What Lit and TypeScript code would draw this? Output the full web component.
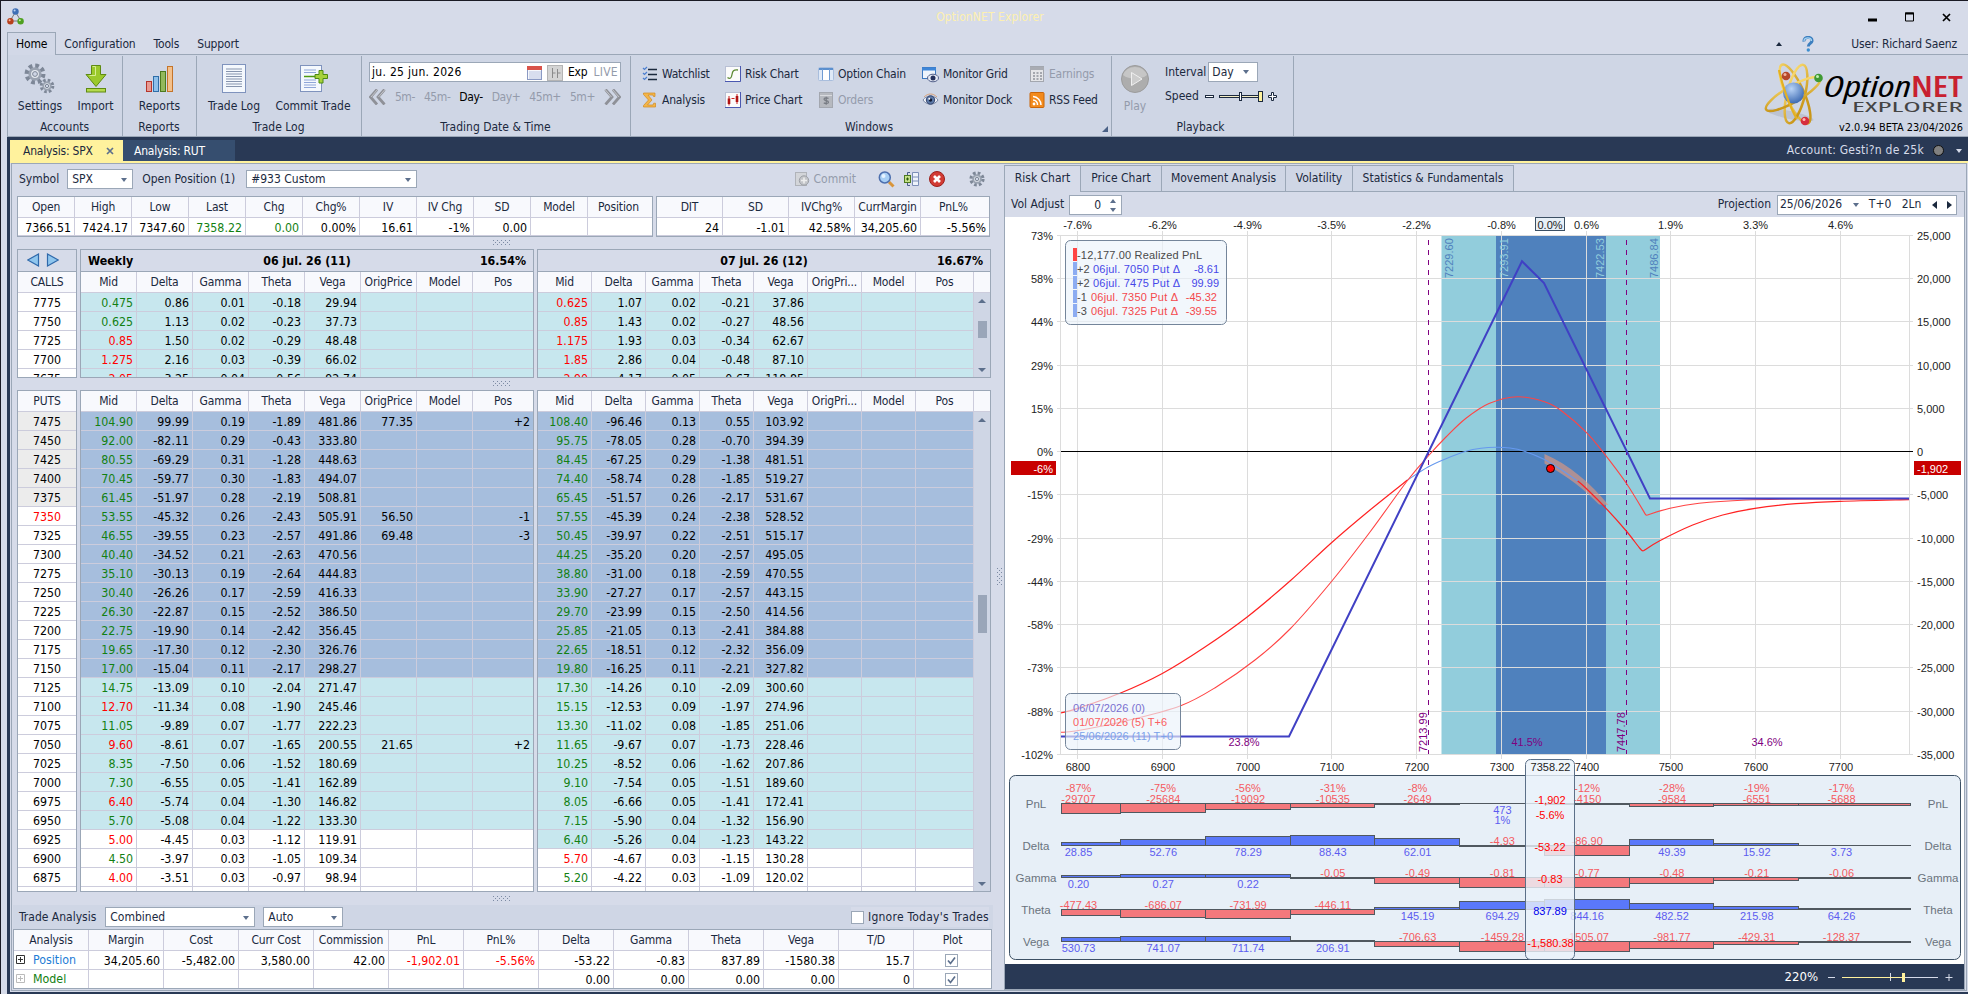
import { LitElement, html, svg, css, nothing } from 'lit';
import { customElement, property } from 'lit/decorators.js';
import { classMap } from 'lit/directives/class-map.js';

const base = css`
  * {
    box-sizing: border-box;
  }
  svg {
    display: block;
    flex: none;
  }
  .combo {
    display: flex;
    align-items: center;
    justify-content: space-between;
    background: #fff;
    border: 1px solid #9ba7b7;
    padding: 1px 5px 0 4px;
    color: #1b293e;
    white-space: nowrap;
  }
  .arrow {
    width: 0;
    height: 0;
    border: 3.5px solid transparent;
    border-top: 4px solid #5c6f8c;
    border-bottom: 0;
  }
  .arrow.up {
    border-top: 0;
    border-bottom: 4px solid #5c6f8c;
  }
`;

/* ---------- icons ---------- */

const gear = (cx: number, cy: number, r: number) => svg`
  <circle cx=${cx} cy=${cy} r=${r} fill="none" stroke="#7d8797" stroke-width=${r * 0.62}
    stroke-dasharray="${r * 0.44} ${r * 0.345}"></circle>
  <circle cx=${cx} cy=${cy} r=${r * 0.66} fill="#e6eaf0" stroke="#9aa3b1" stroke-width=${r * 0.34}></circle>
  <circle cx=${cx} cy=${cy} r=${r * 0.3} fill="#cfd6e5" stroke="#7d8797"></circle>`;

const icons = {
  app: html`<svg width="17" height="17" viewBox="0 0 17 17">
    <path d="M8.5 4 3 13h11z" fill="none" stroke="#777"></path>
    <circle cx="8.5" cy="3.5" r="3.2" fill="#3f6fb5"></circle><circle cx="7.6" cy="2.6" r="1" fill="#b9d3f5"></circle>
    <circle cx="3.4" cy="13.2" r="3.2" fill="#b8401c"></circle><circle cx="2.6" cy="12.2" r="1" fill="#f5b79f"></circle>
    <circle cx="13.6" cy="13.2" r="3.2" fill="#4ea020"></circle><circle cx="12.8" cy="12.2" r="1" fill="#c9f0a5"></circle>
  </svg>`,
  settings: html`<svg width="32" height="32" viewBox="0 0 32 32">${gear(11, 11, 8)}${gear(23, 23, 5.6)}</svg>`,
  import: html`<svg width="32" height="32" viewBox="0 0 32 32">
    <path d="M11.500 2.500h9v9h5.500L16 23.500 6 11.500h5.500z" fill="#9bc92c" stroke="#5e8a12"></path>
    <path d="M12.500 3.500h3v9h-6" fill="none" stroke="#d6ee93"></path>
    <rect x="6.500" y="25.500" width="19" height="3.500" fill="#b5da4c" stroke="#5e8a12"></rect>
  </svg>`,
  reports: html`<svg width="32" height="32" viewBox="0 0 32 32">
    <rect x="2.500" y="18.500" width="5" height="10" fill="#e79a92" stroke="#b5342a"></rect>
    <rect x="9.500" y="13.500" width="5" height="15" fill="#8fc0ea" stroke="#2f6ea8"></rect>
    <rect x="16.500" y="8.500" width="5" height="20" fill="#93b85c" stroke="#4d7a1f"></rect>
    <rect x="23.500" y="3.500" width="5" height="25" fill="#f3c08b" stroke="#c4742a"></rect>
  </svg>`,
  log: html`<svg width="32" height="32" viewBox="0 0 32 32">
    <rect x="4.500" y="1.500" width="23" height="28" fill="#f4f8fd" stroke="#7f93bd"></rect>
    ${[6, 8.500, 11, 13.500, 16, 18.500, 21, 23.500].map((y) => svg`<path d="M8 ${y}h16" stroke="#8795ae"></path>`)}
  </svg>`,
  commitTrade: html`<svg width="32" height="32" viewBox="0 0 32 32">
    <rect x="3.500" y="2.500" width="21" height="26" fill="#f4f8fd" stroke="#7f93bd"></rect>
    ${[7, 9.500, 17, 19.500, 22, 24.500].map((y) => svg`<path d="M7 ${y}h12" stroke="#8fa6d8"></path>`)}
    <path d="M7 13.500h12" stroke="#4d9a10" stroke-width="1.500"></path>
    <path d="M22 7.500h4v4h4.500v4H26V20h-4v-4.500h-4v-4h4z" fill="#a6d13c" stroke="#4c8a12"></path>
  </svg>`,
  calendar: html`<svg width="16" height="16" viewBox="0 0 16 16">
    <rect x=".5" y="1.500" width="14" height="13" fill="#f6f8fc" stroke="#8b9ac4"></rect>
    <rect x="0" y="1" width="15" height="4" fill="#d9534a"></rect>
    ${[7, 9, 11, 13].map((y) => svg`<path d="M2.500 ${y}h11" stroke="#7d8fc4" stroke-dasharray="1 1"></path>`)}
  </svg>`,
  toggle: html`<svg width="17" height="16" viewBox="0 0 17 16">
    <rect x=".5" y=".5" width="15" height="15" fill="#d4d4d4" stroke="#b4b4b4"></rect>
    <path d="M5.500 3v10M5.500 8h3M10.500 4v9M10.500 8h3" stroke="#8a8a8a" fill="none"></path>
  </svg>`,
  chevrons: html`<svg width="17" height="16" viewBox="0 0 17 16">
    <path d="M8 .5 1.500 8l6.500 7.500M15.500.5l-6.500 7.500 6.500 7.500" fill="none" stroke="#8f9198" stroke-width="2.800"></path>
    <path d="M8.500 .5 2 8M16 .5 9.500 8" fill="none" stroke="#c3c5ca"></path>
  </svg>`,
  watchlist: html`<svg width="16" height="16" viewBox="0 0 16 16">
    <path d="M6 3.500h9M6 8.500h9M6 13.500h9" stroke="#1b293e" stroke-width="1.300"></path>
    <path d="M1 2l1.500 1.500L5 1M1 7l1.500 1.500L5 6M1 12l1.500 1.500L5 11" fill="none" stroke="#4c7fd0" stroke-width="1.200"></path>
  </svg>`,
  analysis: html`<svg width="16" height="16" viewBox="0 0 16 16">
    <path d="M1.500 1h11.500v3.500h-1.500L11 3H6l4 5-4.500 5H11l.7-1.800h1.800V15h-12v-1.500L6.500 8l-5-5.500z" fill="#f3b54a" stroke="#d18a1c" stroke-width=".7"></path>
  </svg>`,
  riskChart: html`<svg width="16" height="16" viewBox="0 0 16 16">
    <rect x=".5" y=".5" width="15" height="15" fill="#fbfbfb" stroke="#b9c0d4"></rect>
    <path d="M15.500 0v15.500H0" fill="none" stroke="#4a58b0"></path>
    <path d="M2.500 11.500c2.500 2 4 .5 4.500-3s1.500-5 6-4.500" fill="none" stroke="#5d8a35" stroke-width="1.300"></path>
  </svg>`,
  priceChart: html`<svg width="16" height="16" viewBox="0 0 16 16">
    <rect x=".5" y=".5" width="15" height="15" fill="#fbfbfb" stroke="#b9c0d4"></rect>
    <path d="M15.500 0v15.500H0" fill="none" stroke="#4a58b0"></path>
    <path d="M4 4v9.500M6.500 6.500h3M12 2v10" stroke="#c22" fill="none"></path>
    <path d="M4 6.500v5.500M12 4v6" stroke="#b01212" stroke-width="2.600"></path>
  </svg>`,
  optionChain: html`<svg width="16" height="16" viewBox="0 0 16 16">
    <rect x=".5" y="1.500" width="15" height="13" rx="1" fill="#dfe9f7" stroke="#a9bedd"></rect>
    <path d="M1 3h14" stroke="#5b8fce" stroke-width="2"></path>
    <path d="M4.500 3v11M11.500 3v11" stroke="#6f9bd3"></path><rect x="5" y="4" width="6" height="10" fill="#fff"></rect>
  </svg>`,
  orders: html`<svg width="16" height="16" viewBox="0 0 16 16">
    <rect x="1.500" y=".5" width="13" height="15" fill="#b6b9bf" stroke="#a3a7af"></rect><path d="M2 3.500h12" stroke="#d8dade"></path>
    <path d="M10.500 6.500c-1-1-4.500-1-4.500.7 0 2 4.500 1 4.500 3 0 1.600-3.500 1.600-4.700.5M8.200 4.800v8" fill="none" stroke="#777b83" stroke-width="1.200"></path>
  </svg>`,
  monitorGrid: html`<svg width="17" height="17" viewBox="0 0 17 17">
    <rect x=".5" y="1.500" width="13" height="11" fill="#eef4fc" stroke="#3e79c0"></rect><path d="M0 3h14" stroke="#3e86d8" stroke-width="3"></path>
    <ellipse cx="11" cy="12" rx="5.500" ry="3.800" fill="#e8ecf6" stroke="#53608a"></ellipse><circle cx="11" cy="12" r="2.500" fill="#26315c"></circle>
  </svg>`,
  monitorDock: html`<svg width="17" height="16" viewBox="0 0 17 16">
    <path d="M1 8c3-5 12-5 15 0-3 5.500-12 5.500-15 0z" fill="#f3f6fb" stroke="#7a88a6"></path>
    <path d="M2 5c4-4 9-4 13 0" stroke="#d8a27a" fill="none"></path>
    <circle cx="8.500" cy="8" r="4.200" fill="#5c79a8" stroke="#33436b"></circle><circle cx="8.500" cy="8" r="1.700" fill="#101a33"></circle><circle cx="7.300" cy="6.800" r="1" fill="#fff"></circle>
  </svg>`,
  earnings: html`<svg width="16" height="16" viewBox="0 0 16 16">
    <rect x="1.500" y=".5" width="13" height="15" fill="#e4e5e8" stroke="#a3a7af"></rect><path d="M1 2.500h14" stroke="#a9acb3" stroke-width="3"></path>
    ${[7, 10, 13].map((y) => svg`<path d="M4 ${y}h9" stroke="#8e929a" stroke-width="1.500" stroke-dasharray="2 1.500"></path>`)}
  </svg>`,
  rss: html`<svg width="16" height="16" viewBox="0 0 16 16">
    <rect x="1" y=".5" width="14" height="15" rx="1" fill="#f28a1c" stroke="#c9660a"></rect>
    <circle cx="5" cy="12" r="1.400" fill="#fff"></circle>
    <path d="M4 8a4.500 4.500 0 0 1 4.500 5M4 4.500A8.500 8.500 0 0 1 12 13" fill="none" stroke="#fff" stroke-width="1.500"></path>
  </svg>`,
  play: html`<svg width="32" height="32" viewBox="0 0 32 32">
    <circle cx="16" cy="16" r="13.500" fill="#adadad" stroke="#9c9c9c"></circle>
    <path d="M4 12a13 13 0 0 1 24 0c-6 5-18 5-24 0z" fill="#c6c6c6"></path>
    <path d="M12.500 9.500 23 16l-10.500 6.500z" fill="#cdcdcd" stroke="#f0f0f0"></path>
  </svg>`,
  help: html`<svg width="12" height="16" viewBox="0 0 12 16">
    <path d="M2 5.500C1.500 0 10.500 0 10 5c-.3 2.500-3.700 2.500-3.700 5.500" fill="none" stroke="#3d7fbf" stroke-width="3"></path>
    <path d="M2 5C2 .8 9.800.8 9.500 5" fill="none" stroke="#a8d4f2" stroke-width="1.300"></path><circle cx="6.300" cy="14" r="1.700" fill="#3d8fd0"></circle>
  </svg>`,
  commit: html`<svg width="15" height="16" viewBox="0 0 15 16">
    <rect x=".5" y="1.500" width="11" height="13" fill="#d3d5d9" stroke="#b0b3b9"></rect>
    <circle cx="9" cy="9.500" r="4.700" fill="#c3c5c9" stroke="#9da0a6"></circle><path d="M9 6.500v6M6 9.500h6" stroke="#eee" stroke-width="1.600"></path>
  </svg>`,
  magnifier: html`<svg width="17" height="17" viewBox="0 0 17 17">
    <path d="M11 11l4.500 4.500" stroke="#d9953a" stroke-width="3"></path>
    <circle cx="6.800" cy="6.500" r="5.500" fill="#a8cff5" stroke="#4d6fae" stroke-width="1.500"></circle><circle cx="5.500" cy="5" r="2" fill="#e6f3ff"></circle>
  </svg>`,
  expand: html`<svg width="16" height="14" viewBox="0 0 16 14">
    <rect x=".5" y="3.500" width="6" height="7" fill="#c5e08a" stroke="#4d7a1f"></rect><path d="M2 7h3M3.500 5.500v3" stroke="#2c5a0a"></path>
    <path d="M3.500 3V.5H6M3.500 11v2.500H6" stroke="#4a5a8a" fill="none"></path>
    <path d="M8.500.5h6v13h-6zM8.500 5h6M8.500 9h6" fill="#eef3fb" stroke="#7d8fb8"></path>
  </svg>`,
  close: html`<svg width="16" height="16" viewBox="0 0 16 16">
    <circle cx="8" cy="8" r="7.500" fill="#d23b34" stroke="#9c1f1b"></circle><path d="M5 5l6 6M11 5l-6 6" stroke="#fff" stroke-width="2.700"></path>
  </svg>`,
  gear: html`<svg width="16" height="16" viewBox="0 0 16 16">${gear(8, 8, 5.8)}</svg>`,
  prev: html`<svg width="13" height="14" viewBox="0 0 13 14"><path d="M11.500 1v12L.8 7z" fill="#8fc6ee" stroke="#2f69ab" stroke-width="1.200"></path></svg>`,
  next: html`<svg width="13" height="14" viewBox="0 0 13 14"><path d="M1.500 1v12L12.200 7z" fill="#8fc6ee" stroke="#2f69ab" stroke-width="1.200"></path></svg>`,
};

const grip = html`<svg width="18" height="6" viewBox="0 0 18 6">
  <path d="M0 .5h18M0 4.500h18" stroke="#7c8aa3" stroke-dasharray="1 3"></path>
  <path d="M2 2.500h16" stroke="#7c8aa3" stroke-dasharray="1 3"></path>
</svg>`;

/* ---------- ribbon ---------- */

@customElement('app-ribbon')
export class AppRibbon extends LitElement {
  static styles = [
    base,
    css`
      :host {
        display: block;
        color: #1b293e;
      }
      .title {
        display: grid;
        grid-template-columns: 1fr auto 1fr;
        align-items: center;
        height: 31px;
        padding-left: 6px;
      }
      .title .name {
        color: #fdf0b0;
        padding-top: 2px;
        letter-spacing: 0.1px;
        margin-left: 5px;
      }
      .win {
        display: flex;
        justify-content: flex-end;
        gap: 27px;
        padding-right: 16px;
      }
      .tabs {
        display: flex;
        height: 23px;
        padding-left: 6px;
        letter-spacing: -0.15px;
      }
      .tabs .tab {
        padding: 5px 10px 0 8px;
        border-bottom: 1px solid #9ba7b7;
      }
      .tabs .tab.on {
        border: 1px solid #9ba7b7;
        border-bottom: 0;
        padding: 4px 8px 0;
        color: #000;
        background: #d2d8e7;
      }
      .tabs .user {
        flex: 1;
        display: flex;
        justify-content: flex-end;
        align-items: center;
        border-bottom: 1px solid #9ba7b7;
        padding: 2px 11px 0 0;
      }
      .tabs .arrow {
        border-bottom-color: #1b293e;
      }
      .tabs svg {
        margin: 0 37px 0 20px;
      }
      .ribbon {
        display: flex;
        height: 82px;
        margin-left: 6px;
        padding-top: 1px;
        background: #cfd6e5;
        border: 1px solid #9ba7b7;
        border-width: 0 0 1px 1px;
      }
      .group {
        display: flex;
        flex-direction: column;
        justify-content: space-between;
        border-right: 1px solid #9ba7b7;
        position: relative;
      }
      .group .caption {
        text-align: center;
        height: 16px;
        line-height: 15px;
        padding-right: 1px;
      }
      .body {
        display: flex;
        padding-top: 7px;
      }
      .big {
        display: flex;
        flex-direction: column;
        align-items: center;
        gap: 4px;
        line-height: 15px;
        white-space: nowrap;
      }
      .off {
        color: #949bab;
      }
      .accounts { width: 115px; }
      .accounts .big:first-child { width: 64px; }
      .accounts .big { width: 47px; }
      .reports { width: 74px; }
      .reports .big { width: 73px; }
      .trade { width: 165px; }
      .trade .big:first-child { width: 74px; }
      .trade .big { width: 84px; }
      .date { width: 269px; }
      .date .body { flex-direction: column; padding: 6px 9px 0 7px; gap: 7px; }
      .datebox {
        display: flex;
        align-items: center;
        height: 20px;
        background: #fff;
        border: 1px solid #9ba7b7;
        padding: 1px 2px 0;
      }
      .datebox .day { flex: 1; color: #000; letter-spacing: 0.3px; }
      .datebox svg { margin-right: 4px; }
      .datebox .exp { margin-right: 6px; color: #000; letter-spacing: -0.2px; }
      .datebox .off { letter-spacing: 0.3px; }
      .steps { display: flex; align-items: center; justify-content: space-between; letter-spacing: -0.4px; }
      .steps .cur { color: #000; }
      .flip { transform: scaleX(-1); }
      .windows { width: 481px; }
      .windows .body {
        display: grid;
        grid-template-columns: 83px 93px 104px 107px 80px;
        grid-template-rows: 26px 26px;
        padding: 5px 0 0 11px;
        letter-spacing: -0.2px;
      }
      .windows .caption, .playback .caption { padding-right: 4px; }
      .item { display: flex; align-items: center; gap: 4px; white-space: nowrap; }
      .corner {
        position: absolute;
        right: 3px;
        bottom: 4px;
        border: 3.5px solid transparent;
        border-right-color: #4a6186;
        border-bottom-color: #4a6186;
      }
      .playback { width: 182px; }
      .playback .big { width: 46px; }
      .speed { display: flex; flex-direction: column; gap: 7px; padding-left: 7px; margin-top: -1px; }
      .speed div { display: flex; align-items: center; }
      .speed .combo { width: 50px; height: 20px; margin-left: 2px; padding: 0 8px 0 3px; }
      .speed svg { margin-left: 6px; }
      .logo { margin: 5px 2px 0 auto; }
    `,
  ];

  big(icon: unknown, label: string, off = false) {
    return html`<div class="big ${off ? 'off' : ''}">${icon}<span>${label}</span></div>`;
  }

  item(icon: unknown, label: string, off = false) {
    return html`<div class="item ${off ? 'off' : ''}">${icon}<span>${label}</span></div>`;
  }

  logo() {
    return html`<svg class="logo" width="204" height="72" viewBox="1762 61 204 72">
      <defs>
        <radialGradient id="core" cx=".4" cy=".3" r=".7">
          <stop offset="0" stop-color="#b9d4f7"></stop><stop offset="1" stop-color="#3f6cb3"></stop>
        </radialGradient>
        <linearGradient id="gold" x1="0" y1="0" x2="1" y2="1">
          <stop offset="0" stop-color="#ffe27a"></stop><stop offset="1" stop-color="#c08a08"></stop>
        </linearGradient>
      </defs>
      <ellipse cx="1790" cy="115" rx="24" ry="4" fill="#b3bbcb" opacity=".7" transform="rotate(12 1790 115)"></ellipse>
      <g fill="none" stroke="url(#gold)" stroke-width="2.500">
        <ellipse cx="1795" cy="94" rx="9" ry="32" transform="rotate(-24 1795 94)"></ellipse>
        <ellipse cx="1796" cy="94" rx="9" ry="30" transform="rotate(14 1796 94)"></ellipse>
        <ellipse cx="1793" cy="94" rx="8" ry="31" transform="rotate(60 1793 94)"></ellipse>
      </g>
      <circle cx="1793.500" cy="93" r="10.500" fill="url(#core)"></circle>
      <path d="M1779 70c3 14 10 36 18 49" fill="none" stroke="#e3b023" stroke-width="2.200"></path>
      <circle cx="1786" cy="76" r="4.300" fill="#b5482a"></circle><circle cx="1785" cy="74.500" r="1.500" fill="#f0b09a"></circle>
      <circle cx="1818.500" cy="78" r="4.300" fill="#3f9a32"></circle><circle cx="1817.500" cy="76.500" r="1.500" fill="#c5f0b5"></circle>
      <circle cx="1805" cy="121" r="4.300" fill="#d62e3c"></circle><circle cx="1804" cy="119.500" r="1.500" fill="#ffb5b5"></circle>
      <text x="1824" y="97" font-family="Open Sans, Noto Sans, sans-serif" font-style="italic" font-size="29" textLength="87" lengthAdjust="spacingAndGlyphs" fill="#000">Option</text>
      <text x="1911" y="97" font-family="Open Sans, Noto Sans, sans-serif" font-weight="600" font-size="29" textLength="52" lengthAdjust="spacingAndGlyphs" fill="#c8202f">NET</text>
      <text x="1852" y="111.500" font-family="Open Sans, Noto Sans, sans-serif" font-size="14" textLength="111" lengthAdjust="spacingAndGlyphs" fill="#444">EXPLORER</text>
      <text x="1839" y="131" font-size="11" textLength="124" lengthAdjust="spacingAndGlyphs" fill="#000">v2.0.94 BETA 23/04/2026</text>
    </svg>`;
  }

  render() {
    return html`
      <div class="title">
        ${icons.app}
        <span class="name">OptionNET Explorer</span>
        <div class="win">
          <svg width="10" height="10"><path d="M0 8h9" stroke="#000" stroke-width="3"></path></svg>
          <svg width="10" height="10"><path d="M.5 1v8h8V1z" fill="none" stroke="#000"></path><path d="M0 1.500h9" stroke="#000" stroke-width="2"></path></svg>
          <svg width="10" height="10"><path d="M1 2l7 7M8 2l-7 7" stroke="#000" stroke-width="1.700"></path></svg>
        </div>
      </div>
      <div class="tabs">
        <span class="tab on">Home</span>
        <span class="tab">Configuration</span>
        <span class="tab">Tools</span>
        <span class="tab">Support</span>
        <div class="user"><i class="arrow up"></i>${icons.help}User: Richard Saenz</div>
      </div>
      <div class="ribbon">
        <div class="group accounts">
          <div class="body">${this.big(icons.settings, 'Settings')}${this.big(icons.import, 'Import')}</div>
          <div class="caption">Accounts</div>
        </div>
        <div class="group reports">
          <div class="body">${this.big(icons.reports, 'Reports')}</div>
          <div class="caption">Reports</div>
        </div>
        <div class="group trade">
          <div class="body">${this.big(icons.log, 'Trade Log')}${this.big(icons.commitTrade, 'Commit Trade')}</div>
          <div class="caption">Trade Log</div>
        </div>
        <div class="group date">
          <div class="body">
            <div class="datebox">
              <span class="day">ju. 25 jun. 2026</span>${icons.calendar}${icons.toggle}
              <span class="exp">Exp</span><span class="off">LIVE</span>
            </div>
            <div class="steps off">
              ${icons.chevrons}<span>5m-</span><span>45m-</span><span class="cur">Day-</span>
              <span>Day+</span><span>45m+</span><span>5m+</span><span class="flip">${icons.chevrons}</span>
            </div>
          </div>
          <div class="caption">Trading Date &amp; Time</div>
        </div>
        <div class="group windows">
          <div class="body">
            ${this.item(icons.watchlist, 'Watchlist')}${this.item(icons.riskChart, 'Risk Chart')}
            ${this.item(icons.optionChain, 'Option Chain')}${this.item(icons.monitorGrid, 'Monitor Grid')}
            ${this.item(icons.earnings, 'Earnings', true)}
            ${this.item(icons.analysis, 'Analysis')}${this.item(icons.priceChart, 'Price Chart')}
            ${this.item(icons.orders, 'Orders', true)}${this.item(icons.monitorDock, 'Monitor Dock')}
            ${this.item(icons.rss, 'RSS Feed')}
          </div>
          <div class="caption">Windows</div>
          <i class="corner"></i>
        </div>
        <div class="group playback">
          <div class="body">
            ${this.big(icons.play, 'Play', true)}
            <div class="speed">
              <div>Interval<span class="combo">Day<i class="arrow"></i></span></div>
              <div>
                Speed
                <svg width="74" height="14" viewBox="0 0 74 14">
                  <rect x=".5" y="5.500" width="8" height="2" fill="#fff" stroke="#1b293e"></rect>
                  <rect x="14.500" y="5.500" width="40" height="2" fill="#f4edc4" stroke="#1b293e"></rect>
                  <rect x="34.500" y="2.500" width="2" height="8" fill="#fff" stroke="#1b293e"></rect>
                  <rect x="53.500" y="1.500" width="4" height="10" fill="#fff29d" stroke="#1b293e"></rect>
                  <path d="M66.500 2.500h2v3h3v2h-3v3h-2v-3h-3v-2h3z" fill="#fff" stroke="#1b293e"></path>
                </svg>
              </div>
            </div>
          </div>
          <div class="caption">Playback</div>
        </div>
        ${this.logo()}
      </div>
    `;
  }
}

/* ---------- option chain and trade analysis ---------- */

const STRIKES_CALLS = [7775, 7750, 7725, 7700, 7675];

const callsA = `g0.475 0.86 0.01 -0.18 29.94
g0.625 1.13 0.02 -0.23 37.73
r0.85 1.50 0.02 -0.29 48.48
r1.275 2.16 0.03 -0.39 66.02
r2.05 3.25 0.04 -0.56 92.74`;

const callsB = `r0.625 1.07 0.02 -0.21 37.86
r0.85 1.43 0.02 -0.27 48.56
r1.175 1.93 0.03 -0.34 62.67
r1.85 2.86 0.04 -0.48 87.10
r2.90 4.17 0.05 -0.67 118.85`;

const putsA = `g104.90 99.99 0.19 -1.89 481.86 77.35 +2
g92.00 -82.11 0.29 -0.43 333.80
g80.55 -69.29 0.31 -1.28 448.63
g70.45 -59.77 0.30 -1.83 494.07
g61.45 -51.97 0.28 -2.19 508.81
g53.55 -45.32 0.26 -2.43 505.91 56.50 -1
g46.55 -39.55 0.23 -2.57 491.86 69.48 -3
g40.40 -34.52 0.21 -2.63 470.56
g35.10 -30.13 0.19 -2.64 444.83
g30.40 -26.26 0.17 -2.59 416.33
g26.30 -22.87 0.15 -2.52 386.50
g22.75 -19.90 0.14 -2.42 356.45
g19.65 -17.30 0.12 -2.30 326.76
g17.00 -15.04 0.11 -2.17 298.27
g14.75 -13.09 0.10 -2.04 271.47
r12.70 -11.34 0.08 -1.90 245.46
g11.05 -9.89 0.07 -1.77 222.23
r9.60 -8.61 0.07 -1.65 200.55 21.65 +2
g8.35 -7.50 0.06 -1.52 180.69
g7.30 -6.55 0.05 -1.41 162.89
r6.40 -5.74 0.04 -1.30 146.82
g5.70 -5.08 0.04 -1.22 133.30
r5.00 -4.45 0.03 -1.12 119.91
g4.50 -3.97 0.03 -1.05 109.34
r4.00 -3.51 0.03 -0.97 98.94`;

const putsB = `g108.40 -96.46 0.13 0.55 103.92
g95.75 -78.05 0.28 -0.70 394.39
g84.45 -67.25 0.29 -1.38 481.51
g74.40 -58.74 0.28 -1.85 519.27
g65.45 -51.57 0.26 -2.17 531.67
g57.55 -45.39 0.24 -2.38 528.52
g50.45 -39.97 0.22 -2.51 515.17
g44.25 -35.20 0.20 -2.57 495.05
g38.80 -31.00 0.18 -2.59 470.55
g33.90 -27.27 0.17 -2.57 443.15
g29.70 -23.99 0.15 -2.50 414.56
g25.85 -21.05 0.13 -2.41 384.88
g22.65 -18.51 0.12 -2.32 356.09
g19.80 -16.25 0.11 -2.21 327.82
g17.30 -14.26 0.10 -2.09 300.60
g15.15 -12.53 0.09 -1.97 274.96
g13.30 -11.02 0.08 -1.85 251.06
g11.65 -9.67 0.07 -1.73 228.46
g10.25 -8.52 0.06 -1.62 207.86
g9.10 -7.54 0.05 -1.51 189.60
g8.05 -6.66 0.05 -1.41 172.41
g7.15 -5.90 0.04 -1.32 156.90
g6.40 -5.26 0.04 -1.23 143.22
r5.70 -4.67 0.03 -1.15 130.28
g5.20 -4.22 0.03 -1.09 120.02`;

const STRIKES_PUTS = Array.from({ length: 25 }, (_, i) => 7475 - i * 25);

@customElement('trade-panel')
export class TradePanel extends LitElement {
  static styles = [
    base,
    css`
      :host {
        display: block;
        width: 981px;
        color: #1b293e;
      }
      .toolbar {
        display: flex;
        align-items: center;
        height: 32px;
        padding: 0 8px 2px 7px;
      }
      .toolbar .symbol { width: 66px; height: 20px; margin: 0 9px 0 8px; }
      .toolbar .position { width: 171px; height: 18px; margin-left: 11px; }
      .toolbar .tools { display: flex; align-items: center; margin-left: auto; }
      .toolbar .off { color: #949bab; margin: 0 22px 0 4px; }
      .toolbar .tools svg { margin-right: 9px; }
      .toolbar .tools svg:first-child { margin: 0; }
      .toolbar .tools svg:last-child { margin: 0 0 0 15px; }
      .row { display: flex; gap: 3px; padding-left: 5px; }
      .grid {
        display: grid;
        border: 1px solid #9ba7b7;
        background: #fff;
        overflow: hidden;
        color: #000;
        font-size: 12.3px;
      }
      .grid > span {
        border: 1px solid #ccccdc;
        border-width: 0 1px 1px 0;
        text-align: right;
        padding-right: 3px;
        line-height: 20px;
        white-space: nowrap;
        overflow: hidden;
      }
      .grid > .h {
        background: #f8f9fd;
        text-align: center;
        padding: 0;
        line-height: 20px;
        color: #1b293e;
        font-size: 12px;
        letter-spacing: -0.15px;
      }
      .grid > .last { border-right: 0; }
      .quote { width: 636px; grid-template: 21px 18px / repeat(10, 57px) 1fr; }
      .stats { width: 334px; grid-template: 21px 18px / repeat(4, 66px) 1fr; }
      .quote .last, .stats .last { padding-right: 3px; }
      .split { display: flex; justify-content: center; align-items: center; height: 12px; padding-left: 0; margin-left: -1px; }
      .box {
        width: 454px;
        display: flex;
        flex-direction: column;
        border: 1px solid #9ba7b7;
        overflow: hidden;
      }
      .box.strikes { width: 60px; }
      .calls { height: 129px; }
      .puts { height: 502px; }
      .box .grid { border: 0; grid-auto-rows: 19px; grid-template-rows: 21px; flex: 1; align-content: start; }
      .box .cap {
        display: grid;
        grid-template-columns: 1fr auto 1fr;
        align-items: center;
        height: 22px;
        flex: none;
        border-bottom: 1px solid #9ba7b7;
        font-weight: bold;
        color: #000;
        padding: 1px 7px 0;
        font-size: 12.3px;
      }
      .box .cap b:last-child { text-align: right; }
      .box .nav { display: flex; justify-content: center; gap: 6px; padding: 0 9px 1px 0; }
      .box.strikes .grid > span { text-align: center; padding: 0; border-right: 0; }
      .box .wide { grid-template-columns: repeat(7, 56px) 1fr; }
      .box .narrow { grid-template-columns: repeat(7, 54px) 1fr; }
      .inner { display: flex; flex: 1; min-height: 0; }
      .grid > .g { color: #128012; }
      .grid > .r { color: #f00; }
      .grid > .one { background: #a6bedd; }
      .grid > .two { background: #c7e7ee; }
      .grid > .itm { background: #ececec; }
      .scroll {
        width: 16px;
        display: flex;
        flex-direction: column;
        align-items: center;
        background: #cfd6e5;
      }
      .scroll .top { width: 16px; height: 21px; background: #f8f9fd; border-bottom: 1px solid #ccccdc; }
      .scroll .thumb { width: 9px; background: #9aa6b9; }
      .scroll .arrow { border-left-width: 4px; border-right-width: 4px; }
      .scroll .up { margin-top: 6px; }
      .scroll .down { margin: auto 0 5px; }
      .trade { display: flex; align-items: center; height: 24px; margin: 0 0 0 1px; padding: 0 4px 0 6px; background: #cfd6e5; }
      .trade .combo { height: 20px; }
      .trade .mode { width: 150px; margin: 0 8px 0 9px; }
      .trade .auto { width: 80px; }
      .trade .ignore { margin-left: auto; display: flex; gap: 4px; background: #d6dbe9; align-items: center; height: 20px; letter-spacing: 0.25px; }
      .check { width: 13px; height: 13px; border: 1px solid #9ba7b7; background: #fff; }
      .analysis { width: 979px; height: 60px; margin-left: 1px; grid-template: 21px 19px 18px / repeat(12, 75px) 1fr; }
      .analysis > .name { display: flex; align-items: center; gap: 7px; padding-left: 2px; text-align: left; }
      .analysis > .name.link { color: #1c7cd6; }
      .analysis > .plot { display: flex; justify-content: center; align-items: center; padding: 0 2px 0 0; }
      .analysis > .low { border-bottom: 0; }
    `,
  ];

  headers(orig: string) {
    return ['Mid', 'Delta', 'Gamma', 'Theta', 'Vega', orig, 'Model', 'Pos'].map(
      (h, i) => html`<span class="h ${i === 7 && orig === 'OrigPrice' ? 'last' : ''}">${h}</span>`
    );
  }

  /** One chain grid; `one` and `two` are the counts of rows inside one and two deviations. */
  chain(data: string, narrow: boolean, one: number, two: number) {
    const orig = narrow ? 'OrigPri...' : 'OrigPrice';
    return html`<div class="grid ${narrow ? 'narrow' : 'wide'}">
      ${this.headers(orig)}
      ${[...data.split('\n'), ' '].map((line, row) => {
        const [mid, delta, gamma, theta, vega, price = '', pos = ''] = line.split(' ');
        const band = { one: row < one, two: row >= one && row < two };
        return [mid, delta, gamma, theta, vega, price, '', pos].map((v, i) => {
          const cls = {
            ...band,
            g: i === 0 && v[0] === 'g',
            r: i === 0 && v[0] === 'r',
            last: i === 7 && !narrow,
          };
          return html`<span class=${classMap(cls)}>${i === 0 ? v.slice(1) : v}</span>`;
        });
      })}
    </div>`;
  }

  checkbox(on: boolean) {
    return html`<svg width="13" height="13" viewBox="0 0 13 13">
      <rect x=".5" y=".5" width="12" height="12" fill="#fff" stroke="#9ba7b7"></rect>
      ${on ? svg`<path d="M3 6.500l2.500 3 4.500-6" fill="none" stroke="#5c6f8c" stroke-width="1.700"></path>` : nothing}
    </svg>`;
  }

  plus(color: string) {
    return html`<svg width="10" height="10" viewBox="0 0 10 10">
      <path d="M.5.5h8v8h-8zM2 4.500h5M4.500 2v5" fill="none" stroke=${color}></path>
    </svg>`;
  }

  strikes(title: string, list: number[]) {
    return html`<div class="grid">
      <span class="h">${title}</span>
      ${list.map(
        (s) => html`<span class=${classMap({ itm: title === 'PUTS' && s > 7350, r: s === 7350 })}>${s}</span>`
      )}
    </div>`;
  }

  render() {
    const quote = ['Open', 'High', 'Low', 'Last', 'Chg', 'Chg%', 'IV', 'IV Chg', 'SD', 'Model', 'Position'];
    const values = ['7366.51', '7424.17', '7347.60', '7358.22', '0.00', '0.00%', '16.61', '-1%', '0.00', '', ''];
    const stats = ['DIT', 'SD', 'IVChg%', 'CurrMargin', 'PnL%'];
    const statValues = ['24', '-1.01', '42.58%', '34,205.60', '-5.56%'];
    const cols = ['Analysis', 'Margin', 'Cost', 'Curr Cost', 'Commission', 'PnL', 'PnL%', 'Delta', 'Gamma', 'Theta', 'Vega', 'T/D', 'Plot'];
    const pos = ['34,205.60', '-5,482.00', '3,580.00', '42.00', '-1,902.01', '-5.56%', '-53.22', '-0.83', '837.89', '-1580.38', '15.7'];
    const model = ['', '', '', '', '', '', '0.00', '0.00', '0.00', '0.00', '0'];
    return html`
      <div class="toolbar">
        Symbol<span class="combo symbol">SPX<i class="arrow"></i></span>
        Open Position (1)<span class="combo position">#933 Custom<i class="arrow"></i></span>
        <div class="tools">
          ${icons.commit}<span class="off">Commit</span>${icons.magnifier}${icons.expand}${icons.close}${icons.gear}
        </div>
      </div>
      <div class="row">
        <div class="grid quote">
          ${quote.map((h, i) => html`<span class="h ${i === 10 ? 'last' : ''}">${h}</span>`)}
          ${values.map((v, i) => html`<span class="${i === 3 || i === 4 ? 'g' : ''} ${i === 10 ? 'last' : ''}">${v}</span>`)}
        </div>
        <div class="grid stats">
          ${stats.map((h, i) => html`<span class="h ${i === 4 ? 'last' : ''}">${h}</span>`)}
          ${statValues.map((v, i) => html`<span class=${i === 4 ? 'last' : ''}>${v}</span>`)}
        </div>
      </div>
      <div class="split">${grip}</div>
      <div class="row">
        <div class="box strikes calls">
          <div class="cap nav">${icons.prev}${icons.next}</div>
          ${this.strikes('CALLS', STRIKES_CALLS)}
        </div>
        <div class="box calls">
          <div class="cap"><b>Weekly</b><b>06 jul. 26 (11)</b><b>16.54%</b></div>
          ${this.chain(callsA, false, 0, 6)}
        </div>
        <div class="box calls">
          <div class="cap"><b></b><b>07 jul. 26 (12)</b><b>16.67%</b></div>
          <div class="inner">
            ${this.chain(callsB, true, 0, 6)}
            <div class="scroll">
              <div class="top"></div>
              <i class="arrow up"></i>
              <div class="thumb" style="height:17px;margin-top:18px"></div>
              <i class="arrow down"></i>
            </div>
          </div>
        </div>
      </div>
      <div class="split">${grip}</div>
      <div class="row">
        <div class="box strikes puts">${this.strikes('PUTS', STRIKES_PUTS)}</div>
        <div class="box puts">${this.chain(putsA, false, 14, 22)}</div>
        <div class="box puts">
          <div class="inner">
            ${this.chain(putsB, true, 14, 23)}
            <div class="scroll">
              <div class="top"></div>
              <i class="arrow up"></i>
              <div class="thumb" style="height:38px;margin-top:173px"></div>
              <i class="arrow down"></i>
            </div>
          </div>
        </div>
      </div>
      <div class="split" style="height:13px">${grip}</div>
      <div class="trade">
        Trade Analysis<span class="combo mode">Combined<i class="arrow"></i></span>
        <span class="combo auto">Auto<i class="arrow"></i></span>
        <span class="ignore"><i class="check"></i>Ignore Today's Trades</span>
      </div>
      <div class="grid analysis">
        ${cols.map((h, i) => html`<span class="h ${i === 12 ? 'last' : ''}">${h}</span>`)}
        <span class="name link">${this.plus('#333')}Position</span>
        ${pos.map((v, i) => html`<span class=${i === 4 || i === 5 ? 'r' : ''}>${v}</span>`)}
        <span class="plot last">${this.checkbox(true)}</span>
        <span class="name g low">${this.plus('#bbb')}Model</span>
        ${model.map((v) => html`<span class="low">${v}</span>`)}
        <span class="plot last low">${this.checkbox(true)}</span>
      </div>
    `;
  }
}

/* ---------- risk chart ---------- */

type Pt = [number, number];

const sx = (strike: number) => 1077.5 + (strike - 6800) * 0.8478;
const sy = (pnl: number) => 451.5 - pnl * 0.00865;

/** Catmull-Rom spline through the points, as a path. */
function smooth(p: Pt[]) {
  let d = `M${p[0]}`;
  for (let i = 0; i < p.length - 1; i++) {
    const a = p[i - 1] ?? p[i];
    const b = p[i];
    const c = p[i + 1];
    const e = p[i + 2] ?? c;
    d += `C${b[0] + (c[0] - a[0]) / 6} ${b[1] + (c[1] - a[1]) / 6} ${c[0] - (e[0] - b[0]) / 6} ${c[1] - (e[1] - b[1]) / 6} ${c}`;
  }
  return d;
}

const t0Left: Pt[] = [[1061, 713], [1077, 708.6], [1120, 693.3], [1162.3, 673.5], [1205, 647], [1247.5, 616.7], [1290, 581], [1331.5, 542.7], [1370, 510], [1407.5, 480]];
const t0Mid: Pt[] = [[1407.5, 480], [1428, 467], [1446, 458.7], [1466, 451.3], [1481, 448.3], [1496, 447.3], [1510, 448], [1524.3, 451.2], [1544, 459.3], [1560, 469], [1577.7, 481]];
const t0Right: Pt[] = [[1577.7, 481], [1586, 488.3], [1606, 508.3], [1626.3, 531], [1640, 548.5], [1643.3, 551]];
const t0Tail: Pt[] = [[1643.3, 551], [1659.3, 541], [1692.7, 525], [1722.7, 515], [1755, 508.3], [1796, 503.7], [1840, 501.3], [1909, 499.7]];
const t6: Pt[] = [[1061, 732.3], [1077, 730.7], [1126.7, 720.7], [1180.7, 705.7], [1216.7, 686.7], [1255, 660], [1290, 629], [1331.5, 581.5], [1370, 532], [1407.5, 480.5], [1429.6, 454.5], [1446, 437], [1466, 418.3], [1489, 403.5], [1517.7, 396.7], [1546, 402.3], [1562.7, 411.7], [1586.3, 432.3], [1602.7, 451.7], [1626.3, 483.3], [1646, 515.3]];
const t6Tail: Pt[] = [[1646, 515.3], [1670, 508.3], [1699, 503.3], [1746, 500], [1800, 499], [1909, 499]];

const edges = [1061.5, 1120.5, 1205.5, 1290.5, 1374.5, 1459.5, 1544.5, 1629.5, 1713.5, 1798.5, 1910.5];

const greeks = [
  { name: 'PnL', y: 803.5, v: ['-29707', '-25684', '-19092', '-10535', '-2649', '473', '-4150', '-9584', '-6551', '-5688'] },
  { name: 'Delta', y: 845.5, v: ['28.85', '52.76', '78.29', '88.43', '62.01', '-4.93', '-86.90', '49.39', '15.92', '3.73'] },
  { name: 'Gamma', y: 877.5, v: ['0.20', '0.27', '0.22', '-0.05', '-0.49', '-0.81', '-0.77', '-0.48', '-0.21', '-0.06'] },
  { name: 'Theta', y: 909.5, v: ['-477.43', '-686.07', '-731.99', '-446.11', '145.19', '694.29', '844.16', '482.52', '215.98', '64.26'] },
  { name: 'Vega', y: 941.5, v: ['530.73', '741.07', '711.74', '206.91', '-706.63', '-1459.28', '-1505.07', '-981.77', '-429.31', '-128.37'] },
];
const pnlPct = ['-87%', '-75%', '-56%', '-31%', '-8%', '1%', '-12%', '-28%', '-19%', '-17%'];

/** Bar height; the largest value in a row is 10 units. */
const bar = (v: string[], i: number) => (Number(v[i]) / Math.max(...v.map((n) => Math.abs(Number(n))))) * 10;

@customElement('risk-chart')
export class RiskChart extends LitElement {
  @property({ type: Number }) spot = 7358.22;

  static styles = [
    base,
    css`
      :host {
        display: block;
      }
      svg {
        background: #fff;
        font-family: 'Liberation Sans', Arial, sans-serif;
        font-size: 11px;
      }
      .mid { text-anchor: middle; }
      .end { text-anchor: end; }
      .gridline { stroke: #dcdcdc; fill: none; shape-rendering: crispEdges; }
      .zero { stroke: #000; shape-rendering: crispEdges; }
      .axis { fill: #222; }
      .purple { fill: #800080; }
      .dash { stroke: #800080; stroke-dasharray: 5 5; shape-rendering: crispEdges; }
      .frame { fill: #e7eff7; stroke: #3c5064; }
      .glass { fill: #ebf2fa; fill-opacity: 0.8; stroke: #5c7088; }
      .legend { fill: #ebf2fa; fill-opacity: 0.65; stroke: #74859a; }
      .expiry { fill: none; stroke: #4040c4; stroke-width: 2; }
      .red { fill: none; stroke: #f22; stroke-width: 1.2; }
      .soft { fill: none; stroke: #f44; stroke-width: 1.1; }
      .today { fill: none; stroke: #6699ee; stroke-width: 1.1; }
      .neg { fill: #f55a60; }
      .pos { fill: #5c5cf0; }
      .hot { fill: #f00; }
      .cool { fill: #00e; }
      .barneg { fill: #f4787c; stroke: #50585f; }
      .barpos { fill: #5a78fa; stroke: #50585f; }
      .label { fill: #6a737d; text-anchor: middle; font-size: 11.500px; }
      .dark { fill: #4a4a4a; }
      .blue { fill: #4747e8; }
      .rose { fill: #f4484c; }
    `,
  ];

  axes() {
    const pct = ['73%', '58%', '44%', '29%', '15%', '0%', '-15%', '-29%', '-44%', '-58%', '-73%', '-88%', '-102%'];
    const top = ['-7.6%', '-6.2%', '-4.9%', '-3.5%', '-2.2%', '-0.8%', '0.6%', '1.9%', '3.3%', '4.6%'];
    return svg`
      ${top.map((t, i) => {
        const x = Math.floor(sx(6800 + i * 100)) + 0.5;
        return svg`
          <path class="gridline" d="M${x} 231V759"></path>
          <text class="axis mid" x=${x} y="229">${t}</text>
          <text class="axis mid" x=${x + 0.5} y="771">${6800 + i * 100}</text>`;
      })}
      ${pct.map((t, i) => {
        const y = Math.floor(sy(25000 - i * 5000)) + 0.5;
        return svg`
          <path class="gridline" d="M1057 ${y}H1913"></path>
          <text class="axis end" x="1053" y=${y + 4}>${t}</text>
          <text class="axis" x="1917" y=${y + 4}>${(25000 - i * 5000).toLocaleString('en-US')}</text>`;
      })}
      <path class="gridline" d="M1060.500 235V755M1909.500 235V755"></path>`;
  }

  vertical(x: number, y: number, text: string, fill: string) {
    return svg`<text transform="translate(${x} ${y}) rotate(-90)" fill=${fill}>${text}</text>`;
  }

  legs() {
    const rows = [
      ['+2', '06jul. 7050 Put Δ', '-8.61'],
      ['+2', '06jul. 7475 Put Δ', '99.99'],
      ['-1', '06jul. 7350 Put Δ', '-45.32'],
      ['-3', '06jul. 7325 Put Δ', '-39.55'],
    ];
    return svg`
      <rect class="legend" x="1065.500" y="240.500" width="161" height="84" rx="5"></rect>
      <rect x="1073" y="248" width="4" height="13" fill="#ff4444"></rect>
      <text class="dark" x="1077" y="259" textLength="125">-12,177.00 Realized PnL</text>
      ${rows.map(([qty, leg, delta], i) => {
        const cls = i < 2 ? 'blue' : 'rose';
        return svg`
          <rect x="1073" y=${262 + i * 14} width="4" height="13" fill="#8cacf2"></rect>
          <text class="dark" x="1077" y=${273 + i * 14}>${qty}</text>
          <text class=${cls} x=${i < 2 ? 1093 : 1091} y=${273 + i * 14} textLength="87">${leg}</text>
          <text class="${cls} end" x=${i < 2 ? 1219 : 1217} y=${273 + i * 14}>${delta}</text>`;
      })}`;
  }

  greekRows() {
    return svg`
      <rect class="frame" x="1009.500" y="775.500" width="951" height="184" rx="6"></rect>
      ${greeks.map(
        ({ name, y, v }) => svg`
          <path d="M1061 ${y}H1911" stroke="#50585f"></path>
          ${v.map((t, i) => {
            const h = Math.round(bar(v, i));
            return h === 0
              ? nothing
              : svg`<rect class=${h < 0 ? 'barneg' : 'barpos'} x=${edges[i]} y=${h < 0 ? y : y - h}
                  width=${edges[i + 1] - edges[i]} height=${Math.abs(h)}></rect>`;
          })}
          ${v.map((t, i) => {
            const neg = t[0] === '-';
            const x = sx(6800 + i * 100) + 1;
            return svg`
              <text class="mid ${neg ? 'neg' : 'pos'}" x=${x} y=${neg ? y - 0.5 : y + 10.5}>${t}</text>
              ${name === 'PnL' ? svg`<text class="mid ${neg ? 'neg' : 'pos'}" x=${x} y=${neg ? 792 : 824}>${pnlPct[i]}</text>` : nothing}`;
          })}
          <text class="label" x="1036" y=${y + 4.5}>${name}</text>
          <text class="label" x="1938" y=${y + 4.5}>${name}</text>`
      )}`;
  }

  render() {
    return html`<svg width="959" height="747" viewBox="1005 217 959 747">
      <rect x="1441.500" y="236" width="218.500" height="518" fill="#92cddc"></rect>
      <rect x="1496" y="236" width="110" height="518" fill="#4f81bd"></rect>
      ${this.axes()}
      <path class="zero" d="M1061 451.500H1913"></path>
      <path class="dash" d="M1428.500 240V754M1626.500 240V754"></path>
      ${this.vertical(1453, 278, '7229.60', '#4f81bd')}
      ${this.vertical(1508, 278, '7293.91', '#92cddc')}
      ${this.vertical(1604, 278, '7422.53', '#92cddc')}
      ${this.vertical(1658, 278, '7486.84', '#4f81bd')}
      ${this.vertical(1427, 752, '7213.99', '#800080')}
      ${this.vertical(1625, 752, '7447.78', '#800080')}
      <text class="purple mid" x="1244" y="746">23.8%</text>
      <text class="purple mid" x="1527" y="746">41.5%</text>
      <text class="purple mid" x="1767" y="746">34.6%</text>
      <path d="M1544.500 454C1570 465 1590 483 1608.500 505L1599 504.500C1585 490 1570 478 1544.500 463.500z" fill="#e09880" opacity=".65"></path>
      <path class="red" d=${smooth(t0Left)}></path>
      <path class="today" d=${smooth(t0Mid)}></path>
      <path class="red" d=${smooth(t0Right)}></path>
      <path class="red" d=${smooth(t0Tail)}></path>
      <path class="soft" d=${smooth(t6)}></path>
      <path class="soft" d=${smooth(t6Tail)}></path>
      <path class="expiry" d="M1061 736.500H1289L1522 261.300 1544 283 1650 498.500H1909"></path>
      <circle cx="1550.500" cy="468.500" r="4" fill="#f00" stroke="#000"></circle>
      <rect x="1011" y="461" width="45" height="14" fill="#c80000"></rect>
      <text class="end" x="1053" y="472.500" fill="#fff">-6%</text>
      <rect x="1914" y="461" width="47" height="14" fill="#c80000"></rect>
      <text x="1917" y="472.500" fill="#fff">-1,902</text>
      ${this.legs()}
      <rect class="legend" x="1065.500" y="693.500" width="115" height="56" rx="5"></rect>
      <text x="1073" y="712" fill="#7a70d0" textLength="72">06/07/2026 (0)</text>
      <text x="1073" y="726" fill="#fa5f62" textLength="94">01/07/2026 (5) T+6</text>
      <text x="1073" y="740" fill="#7ba2ea" textLength="100">25/06/2026 (11) T+0</text>
      ${this.greekRows()}
      <rect class="glass" x="1525.500" y="759.500" width="49" height="200" rx="5"></rect>
      <text class="axis mid" x="1550.500" y="771">${this.spot}</text>
      <text class="mid hot" x="1550" y="804">-1,902</text>
      <text class="mid hot" x="1550" y="819">-5.6%</text>
      <text class="mid hot" x="1550" y="851">-53.22</text>
      <text class="mid hot" x="1550" y="883">-0.83</text>
      <text class="mid cool" x="1550" y="915">837.89</text>
      <text class="mid hot" x="1550.500" y="947">-1,580.38</text>
      <rect class="frame" x="1535.500" y="217.500" width="29" height="13"></rect>
      <text class="axis mid" x="1550" y="229">0.0%</text>
    </svg>`;
  }
}

/* ---------- shell ---------- */

@customElement('app-root')
export class AppRoot extends LitElement {
  static styles = [
    base,
    css`
      :host {
        display: flex;
        flex-direction: column;
        width: 1968px;
        height: 994px;
        overflow: hidden;
        background: #d6dbe9;
        border: 1px solid #1a1a24;
        border-width: 1px 0 0 1px;
        box-sizing: border-box;
        font: 12px/15px 'DejaVu Sans Condensed', 'DejaVu Sans', sans-serif;
        font-stretch: condensed;
        color: #1b293e;
      }
      .doc {
        flex: 1;
        display: flex;
        flex-direction: column;
        margin-left: 6px;
        padding: 0 0 2px 3px;
        background: #293955;
      }
      .tabs {
        display: flex;
        align-items: flex-end;
        height: 24px;
        color: #fff;
        letter-spacing: -0.2px;
      }
      .tabs .tab {
        display: flex;
        align-items: center;
        width: 112px;
        height: 21px;
        padding: 1px 0 0 11px;
        background: #364e6f;
      }
      .tabs .tab.on {
        width: 113px;
        justify-content: space-between;
        padding: 1px 9px 0 13px;
        background: #fff29d;
        color: #1b293e;
      }
      .tabs .account {
        display: flex;
        align-items: center;
        height: 21px;
        margin-left: auto;
        padding-right: 6px;
        gap: 9px;
        color: #d6dbe9;
        letter-spacing: 0.25px;
      }
      .dot { width: 11px; height: 11px; border-radius: 50%; background: #808080; border: 1px solid #111; }
      .account .arrow { border-top-color: #d6dbe9; margin-left: 3px; }
      .panel {
        flex: 1;
        display: flex;
        border-top: 2px solid #fff29d;
        background: #d6dbe9;
        padding: 0 1px 1px;
      }
      .content {
        flex: 1;
        display: grid;
        grid-template-columns: 981px 11px 1fr;
        border: 1px solid #9ba7b7;
      }
      .gutter { display: flex; align-items: center; justify-content: center; }
      .gutter svg { transform: rotate(90deg); }
      .right { display: flex; flex-direction: column; width: 961px; padding-top: 1px; }
      .ctabs { display: flex; height: 27px; letter-spacing: 0; }
      .ctabs span {
        padding: 5px 0 0;
        text-align: center;
        border: 1px solid #9ba7b7;
        border-left-width: 0;
        background: #cfd6e5;
        white-space: nowrap;
      }
      .ctabs .on { border-bottom: 0; border-left-width: 1px; background: #d6dbe9; }
      .ctabs i { flex: 1; border-bottom: 1px solid #9ba7b7; }
      .view { flex: 1; display: flex; flex-direction: column; border: 1px solid #9ba7b7; border-width: 0 1px 1px; }
      .opts { display: flex; align-items: center; height: 25px; padding: 0 7px 0 6px; }
      .spin { width: 53px; height: 20px; margin-left: 5px; padding-left: 24px; }
      .spin div { display: flex; flex-direction: column; gap: 5px; }
      .proj { width: 180px; height: 20px; margin-left: 6px; padding: 0 4px 0 2px; }
      .opts .label { margin-left: auto; }
      .tri { border: 4px solid transparent; border-width: 4px 5px 4px 0; border-right-color: #1b293e; }
      .tri.next { border-width: 4px 0 4px 5px; border-left-color: #1b293e; }
      .status {
        flex: 1;
        display: flex;
        justify-content: flex-end;
        align-items: center;
        gap: 10px;
        padding-right: 10px;
        background: #293955;
        color: #fff;
        font-size: 13px;
      }
    `,
  ];

  render() {
    const tabs: [string, number][] = [
      ['Risk Chart', 77],
      ['Price Chart', 81],
      ['Movement Analysis', 124],
      ['Volatility', 67],
      ['Statistics & Fundamentals', 161],
    ];
    return html`
      <app-ribbon></app-ribbon>
      <div class="doc">
        <div class="tabs">
          <span class="tab on">Analysis: SPX<svg width="8" height="8"><path d="M1 1l6 6M7 1l-6 6" stroke="#5c6f8c" stroke-width="1.700"></path></svg></span>
          <span class="tab">Analysis: RUT</span>
          <span class="account">Account: Gesti?n de 25k<i class="dot"></i><i class="arrow"></i></span>
        </div>
        <div class="panel">
          <div class="content">
            <trade-panel></trade-panel>
            <div class="gutter">${grip}</div>
            <div class="right">
              <div class="ctabs">
                ${tabs.map(([t, w], i) => html`<span class=${i === 0 ? 'on' : ''} style="width:${w}px">${t}</span>`)}<i></i>
              </div>
              <div class="view">
                <div class="opts">
                  Vol Adjust
                  <span class="combo spin">0<div><i class="arrow up"></i><i class="arrow"></i></div></span>
                  <span class="label">Projection</span>
                  <span class="combo proj">25/06/2026<i class="arrow"></i><span>T+0</span><span>2Ln</span><i class="tri"></i><i class="tri next"></i></span>
                </div>
                <risk-chart></risk-chart>
                <div class="status">
                  220%
                  <svg width="126" height="16" viewBox="0 0 126 16">
                    <path d="M0 8.500h7M121 5v7M117.500 8.500h7M75 8.500h35M62.500 4v8" stroke="#d6dbe9"></path>
                    <path d="M14 8.500h60" stroke="#fff29d"></path>
                    <rect x="74" y="4" width="3" height="9" fill="#fff29d"></rect>
                  </svg>
                </div>
              </div>
            </div>
          </div>
        </div>
      </div>
    `;
  }
}
